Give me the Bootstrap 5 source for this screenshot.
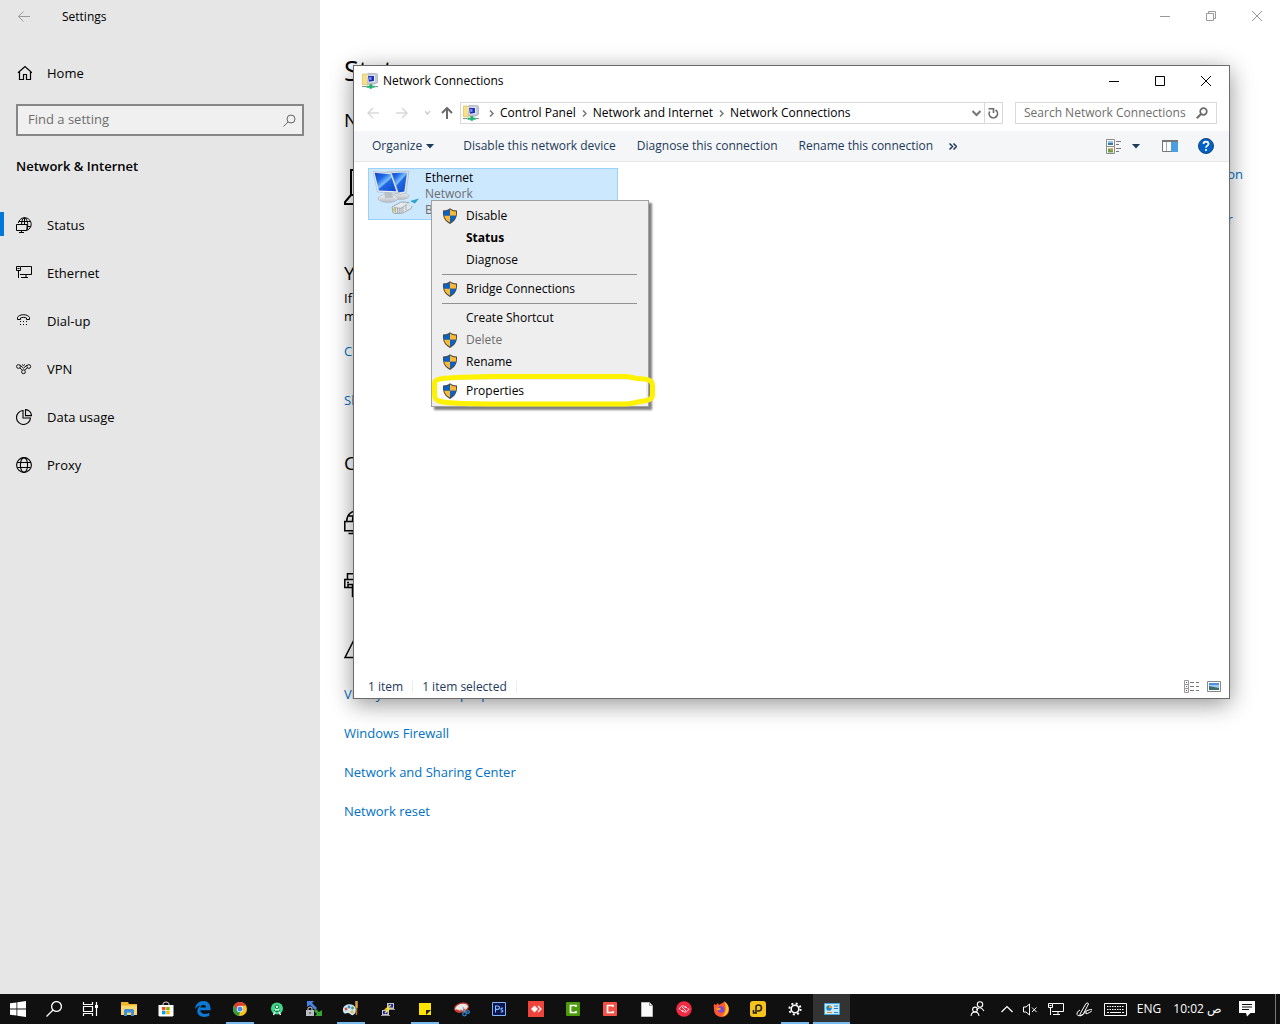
<!DOCTYPE html>
<html lang="en">
<head>
<meta charset="utf-8">
<meta name="viewport" content="width=device-width, initial-scale=1">
<title>Settings</title>
<link href="https://cdn.jsdelivr.net/npm/bootstrap@5.3.0/dist/css/bootstrap.min.css" rel="stylesheet">
<style>
body{font-family:"Open Sans","Noto Sans",sans-serif;font-size:12px;line-height:16px;color:#000;background:#fff}
svg{display:block;flex:none}
button{font:inherit;color:inherit;background:none;border:0;padding:0}
a{text-decoration:none;color:#0071c5}
.desk{min-height:100vh;position:relative;overflow:hidden}
/* settings app */
.side{width:25%;min-width:280px;background:#e6e6e6;padding-top:1px}
.bar-top{height:32px}
.side-link{height:48px;color:#000;font-size:13px;padding-left:16px;gap:15px;position:relative}
.side-link.on::before{content:"";position:absolute;left:0;top:11px;width:4px;height:24px;background:#0078d7}
.app-name{margin-left:30px}
.find{margin:7px 16px 0;height:32px;border:2px solid #868686;background:#f0f0f0;padding-right:6px}
.find input{font-size:13px;background:none;border:0;outline:0;padding:0 0 2px 10px;min-width:0}
.find input::placeholder,.seek input::placeholder{color:#6d6d6d;opacity:1}
.side-title{font-size:13px;line-height:20px;font-weight:600;margin:20px 16px 25px}
.pane{padding-left:24px;font-size:13px;line-height:18px}
.pane h1{font-size:27px;line-height:32px;font-weight:400;margin:23px 0 21px}
.pane h2{font-size:19px;line-height:24px;font-weight:400;margin-bottom:0}
.pane .lnk{display:block;line-height:20px}
.pane .gap-a{margin-top:37px}.pane .gap-b{margin-top:56px}.pane .gap-c{margin-top:4px}.pane .gap-d{margin-top:16px}
.pane .gap-e{margin-top:29px}.pane .gap-f{margin-top:41px}.pane .gap-g{margin-top:31px}.pane .gap-h{margin-top:20px}.pane .gap-i{margin-top:19px}
.helps{margin-top:132px;padding-right:37px}
.helps .lnk{margin-bottom:25px}
.wctl{color:#999}
.wctl button{width:46px;height:32px;display:grid;place-items:center}
/* explorer window */
.win{position:absolute;left:353px;top:65px;right:50px;height:634px;background:#fff;border:1px solid #6b6b6b;box-shadow:0 5px 22px rgba(0,0,0,.42)}
.win-title{height:30px;padding-left:8px;gap:5px}
.wctl.dark{color:#000}
.addr-row{height:34px;padding:0 12px 0 13px;margin-bottom:1px}
.up{margin-left:10px}
.addr{height:22px;border:1px solid #d9d9d9;margin-left:7px;margin-right:12px}
.addr button{height:20px}
.crumb{gap:6px;padding-left:2px}
.crumb .ico{margin-right:4px}
.refresh{width:18px;margin-left:3px;border-left:1px solid #d9d9d9;display:grid;place-items:center}
.seek{width:202px;height:22px;border:1px solid #d9d9d9}
.seek input{font-size:12px;border:0;outline:0;background:none;padding:0 0 1px 8px;min-width:0}
.cmd{height:31px;background:#f5f6f7;border-bottom:1px solid #e8e8e9;color:#1e395b;padding:0 15px 0 18px}
.cmd-a{margin-left:29px}
.cmd-b{margin-left:21px}
.cmd-c{margin-left:16px}
.v-opt{margin-left:10px}
.v-pane{margin-left:22px}
.v-help{margin-left:20px}
.files{padding:6px 14px}
.tile{width:250px;height:52px;background:#cce8ff;border:1px solid #99d1ff;gap:6px;padding:1px 0 0 4px}
.tile small{display:block;font-size:12px;color:#6d6d6d}
.stat{height:23px;color:#1e395b;padding:0 8px 0 14px}
.stat span{border-right:1px solid #ececec;padding-right:9px;margin-right:9px;line-height:12px}
/* context menu */
.ctx{position:absolute;left:431px;top:200px;width:218px;background:#eee;border:1px solid #a0a0a0;padding:4px 2px;box-shadow:3px 3px 2px rgba(0,0,0,.5)}
.ctx button{display:flex;align-items:center;width:100%;height:22px;padding-left:8px;gap:8px;text-align:left}
.ctx button:disabled{color:#6d6d6d}
.ctx button.hot{background:#fff}
.ctx hr{margin:3px 9px 3px 8px;border-top:1px solid #919191;opacity:1}
.ico{width:16px;height:16px;flex:none}
.ring{position:absolute;left:431px;top:373px;pointer-events:none}
/* taskbar */
.task{height:30px;background:#101010;color:#fff}
.task button{height:30px;width:37px;display:grid;place-items:center;position:relative}
.task .sys{width:36px}
.task .pinned{margin-left:2px}
.task .run::after{content:"";position:absolute;left:5px;right:4px;bottom:0;height:2px;background:#76b9ed}
.task .cur{background:#333}
.task .cur::after{left:0;right:0}
.task .tray{width:auto}
.traybox{gap:10px;padding-right:20px;border-right:1px solid #777;margin-right:4px;height:30px}
.task .people{margin-right:6px}
.task .wide{margin-left:2px}
.task .note{margin-left:7px}
</style>
</head>
<body>
<svg width="0" height="0" class="position-absolute">
<defs>
<symbol id="shield" viewBox="0 0 16 16"><path d="M8 .2C10 1.800 12 2.400 15 2.500 15.400 9 13.500 13.200 8 15.900 2.500 13.200.6 9 1 2.500 4 2.400 6 1.800 8 .2z" fill="#4a4a48"/><path d="M8 1.600v6.200H2.200C1.900 6.300 1.900 5 2 3.600 4.500 3.400 6.300 2.800 8 1.600z" fill="#0a62c4"/><path d="M8 1.600v6.200h5.800c.3-1.500.3-2.800.2-4.200C11.500 3.400 9.700 2.800 8 1.600z" fill="#fdb933"/><path d="M8 7.800v6.800c-3.300-1.800-5.200-3.700-5.800-6.800z" fill="#fdb933"/><path d="M8 7.800v6.800c3.300-1.800 5.200-3.700 5.800-6.800z" fill="#0a62c4"/></symbol>
<symbol id="netfold" viewBox="0 0 16 16"><path d="M.3 1h5.200v10.700H.3z" fill="#f7e08a" stroke="#d0b04a" stroke-width=".6"/><path d="M6 .4h8l1.600 1v8L13 11H6z" fill="#c5c8d8" stroke="#9a9eb0" stroke-width=".6"/><path d="M5 1.800l8 .4v6.600l-7 .8z" fill="#eef0fa"/><path d="M6 2.800l6 .3v5l-5.200.6z" fill="#1c2fbd"/><path d="M7 4l2.500.2v2.500L7.500 7z" fill="#7d98f5"/><path d="M6.500 10h4v1.500h-4z" fill="#b7bac8"/><path d="M7.500 11.300h2.800v1.700H7.500z" fill="#19a45c"/><path d="M4.500 12.800h8.300v2H10v1H7.500v-1h-3z" fill="#1fb573"/><path d="M0 13.500h4.500M12.800 13.500H16" stroke="#86908d" stroke-width="1.200"/></symbol>
<symbol id="globepc" viewBox="0 0 16 16"><path d="M2.300 6A6.500 6.500 0 1 1 11.500 13.100M5.500 7Q5.700 2 8 .7M11 13Q13.200 6 9.300.7M3 4.500h11.500M11.500 9.500H15M8.500.7V7" fill="none" stroke="currentColor"/><path d="M.5 7.500h10.500v6H.5zM5.500 13.500v2M3 15.500h5" fill="none" stroke="currentColor"/></symbol>
<symbol id="pc" viewBox="0 0 16 14"><path d="M5 1.500h10.500v8H4M.5 1.500h4v4h-4zM2.500 5.500v7.500M10 9.500v3M5 12.500h7M1.500 3.500h2" fill="none" stroke="currentColor"/></symbol>
</defs></svg>
<div class="desk d-flex flex-column">
 <div class="d-flex flex-grow-1">
  <aside class="side">
   <div class="bar-top d-flex align-items-center">
    <button aria-label="Back" class="ps-3"><svg width="16" height="14" viewBox="0 0 16 14" fill="none" stroke="#999"><path d="M14 6.500H2.500M7.500 1.500l-5 5 5 5"/></svg></button>
    <span class="app-name">Settings</span>
   </div>
   <a href="#" class="side-link d-flex align-items-center mt-3"><svg class="ico" viewBox="0 0 16 16" fill="none" stroke="#000" stroke-width="1.200"><path d="M2 7.800L9 1.500l7 6.300M3.500 7v7.500h4V9.500h3v5h4V7"/></svg><span>Home</span></a>
   <div class="find d-flex align-items-center"><input type="text" class="flex-grow-1" aria-label="Find a setting" placeholder="Find a setting"><svg width="13" height="13" viewBox="0 0 13 13" fill="none" stroke="#666"><circle cx="8" cy="5" r="4"/><path d="M5 8L.5 12.500"/></svg></div>
   <div class="side-title">Network &amp; Internet</div>
   <nav>
    <a href="#" class="side-link on d-flex align-items-center"><svg class="ico" viewBox="0 0 16 16"><use href="#globepc"/></svg><span>Status</span></a>
    <a href="#" class="side-link d-flex align-items-center"><svg class="ico" viewBox="0 0 16 16"><use href="#pc" width="16" height="14"/></svg><span>Ethernet</span></a>
    <a href="#" class="side-link d-flex align-items-center"><svg class="ico" viewBox="0 0 16 16" fill="none" stroke="#000"><path d="M1.500 6.500v-2C3 .8 12 .8 13.500 4.500v2h-3V5c-1-.8-5-.8-6 0v1.500z"/><path d="M4 8.500h1M7 8.500h1M10 8.500h1M4 11.500h1M7 11.500h1M10 11.500h1"/></svg><span>Dial-up</span></a>
    <a href="#" class="side-link d-flex align-items-center"><svg class="ico" viewBox="0 0 16 16" fill="none" stroke="#111"><circle cx="2.500" cy="5.500" r="1.900"/><circle cx="12.800" cy="5.500" r="1.900"/><circle cx="7.500" cy="10.800" r="1.900"/><path d="M4 4l3.500 3.200L11 4M3.800 6.800l2.700 2.500M8.500 9L11.500 7M6 3.500l1.500 1 1.500-1"/></svg><span>VPN</span></a>
    <a href="#" class="side-link d-flex align-items-center"><svg class="ico" viewBox="0 0 16 16" fill="none" stroke="#000" stroke-width="1.100"><path d="M7 1.500A7 7 0 1 0 14.500 9H7z"/><path d="M9.500.6v6h6A6.500 6.500 0 0 0 9.500.6z"/></svg><span>Data usage</span></a>
    <a href="#" class="side-link d-flex align-items-center"><svg class="ico" viewBox="0 0 16 16" fill="none" stroke="#000" stroke-width="1.100"><circle cx="8" cy="8" r="7.400"/><ellipse cx="8" cy="8" rx="3.600" ry="7.400"/><path d="M1.500 5.500h13M1.500 10.500h13"/></svg><span>Proxy</span></a>
   </nav>
  </aside>
  <main class="flex-grow-1 d-flex flex-column">
   <div class="bar-top wctl d-flex justify-content-end">
    <button aria-label="Minimize"><svg width="10" height="10" stroke="currentColor"><path d="M0 5.500h10"/></svg></button>
    <button aria-label="Restore"><svg width="10" height="10" fill="none" stroke="currentColor"><path d="M.5 2.500h7v7h-7zM2.500 2V.5h7v7H8"/></svg></button>
    <button aria-label="Close"><svg width="10" height="10" stroke="currentColor"><path d="M0 0l10 10M10 0L0 10"/></svg></button>
   </div>
   <div class="d-flex">
    <div class="pane">
     <h1>Status</h1>
     <h2>Network status</h2>
     <svg class="gap-a" width="54" height="36" viewBox="0 0 54 36" fill="none" stroke="#000" stroke-width="2"><path d="M7 1h44v25H7zM7 26L1 33v2h52v-2l-3-7"/></svg>
     <h2 class="gap-b">You’re connected</h2>
     <div class="gap-c">If you have a limited plan,<br>make it metered</div>
     <a href="#" class="lnk gap-d">Change connection</a>
     <a href="#" class="lnk gap-e">Show networks</a>
     <h2 class="gap-f">Change settings</h2>
     <svg class="gap-g" width="32" height="32" viewBox="0 0 32 32" fill="none" stroke="#000" stroke-width="1.500"><path d="M2.700 15C3 9 7 4.800 14 4.500c8 0 13 5 13 11s-3 9-8 11M8.500 15C8.500 9 11 6 14 4.800M4 10h22"/><path d="M.8 15.500h18.500v9.300H.8zM9.500 25v2.500M4.500 27.500h11"/></svg>
     <svg class="gap-g" width="32" height="32" viewBox="0 0 32 32" fill="none" stroke="#000" stroke-width="1.500"><path d="M3.500 10V4.800h22V10M5 18.500H.8V10.500h27v8H9M3 13.500h2M4 15.500h6v3H4zM8.500 15.500v12h16v-12"/></svg>
     <svg class="gap-g" width="32" height="32" viewBox="0 0 32 32" fill="none" stroke="#000" stroke-width="1.500"><path d="M1 25.500L14 0l13 25.500zM14 9v8M14 20v2"/></svg>
     <a href="#" class="lnk gap-h">View your network properties</a>
     <a href="#" class="lnk gap-i">Windows Firewall</a>
     <a href="#" class="lnk gap-i">Network and Sharing Center</a>
     <a href="#" class="lnk gap-i">Network reset</a>
    </div>
    <div class="pane helps ms-auto">
     <a href="#" class="lnk">Fixing network connection</a>
     <a href="#" class="lnk">Update network adapter</a>
    </div>
   </div>
  </main>
 </div>

 <section class="win d-flex flex-column" aria-label="Network Connections">
  <div class="win-title d-flex align-items-center">
   <svg class="ico"><use href="#netfold"/></svg><span>Network Connections</span>
   <div class="wctl dark d-flex ms-auto">
    <button aria-label="Minimize"><svg width="10" height="10" stroke="currentColor"><path d="M0 5.500h10"/></svg></button>
    <button aria-label="Maximize"><svg width="10" height="10" fill="none" stroke="currentColor"><path d="M.5 .5h9v9h-9z"/></svg></button>
    <button aria-label="Close"><svg width="10" height="10" stroke="currentColor"><path d="M0 0l10 10M10 0L0 10"/></svg></button>
   </div>
  </div>
  <div class="addr-row d-flex align-items-center">
   <button aria-label="Back"><svg width="12" height="12" fill="none" stroke="#d9d9d9" stroke-width="1.500"><path d="M12 6H1M6 1L1 6l5 5"/></svg></button>
   <button aria-label="Forward" class="ms-3"><svg width="14" height="12" fill="none" stroke="#d9d9d9" stroke-width="1.500"><path d="M1 6h11M7 1l5 5-5 5"/></svg></button>
   <button aria-label="Recent" class="ms-3"><svg width="6" height="6" fill="none" stroke="#d0d0d0" stroke-width="1.500"><path d="M0 1l2.500 3L5 1"/></svg></button>
   <button aria-label="Up" class="up"><svg width="12" height="12" fill="none" stroke="#6b6b6b" stroke-width="2"><path d="M6 12V1M1 6l5-5 5 5"/></svg></button>
   <div class="addr d-flex align-items-center flex-grow-1">
    <div class="crumb d-flex align-items-center flex-grow-1">
     <svg class="ico"><use href="#netfold"/></svg>
     <svg width="5" height="7" fill="none" stroke="#777" stroke-width="1.500"><path d="M1 .5l3 3-3 3"/></svg><span>Control Panel</span>
     <svg width="5" height="7" fill="none" stroke="#777" stroke-width="1.500"><path d="M1 .5l3 3-3 3"/></svg><span>Network and Internet</span>
     <svg width="5" height="7" fill="none" stroke="#777" stroke-width="1.500"><path d="M1 .5l3 3-3 3"/></svg><span>Network Connections</span>
    </div>
    <button aria-label="Previous locations"><svg width="9" height="7" fill="none" stroke="#777" stroke-width="2"><path d="M.5 1l4 4 4-4"/></svg></button>
    <button class="refresh" aria-label="Refresh"><svg width="11" height="12" viewBox="0 0 11 12" fill="none" stroke="#6b6b6b" stroke-width="1.600"><path d="M1.700 4.500A4.200 4.200 0 1 0 7.500 3"/><path d="M.5 1.800h5V6"/></svg></button>
   </div>
   <div class="seek d-flex align-items-center"><input type="text" class="flex-grow-1" aria-label="Search Network Connections" placeholder="Search Network Connections"><svg class="me-2" width="12" height="12" fill="none" stroke="#6b6b6b" stroke-width="1.700"><circle cx="7.500" cy="4.500" r="3.300"/><path d="M5 7L.8 11.200" stroke-width="2"/></svg></div>
  </div>
  <div class="cmd d-flex align-items-center">
   <button class="d-flex align-items-center">Organize<svg class="ms-1" width="8" height="5" fill="#1e395b"><path d="M0 0h8L4 4.500z"/></svg></button>
   <button class="cmd-a">Disable this network device</button>
   <button class="cmd-b">Diagnose this connection</button>
   <button class="cmd-b">Rename this connection</button>
   <button class="cmd-c" aria-label="More commands"><svg width="8" height="7" fill="none" stroke="#1e395b" stroke-width="1.500"><path d="M.5.500l3 3-3 3M4.500.500l3 3-3 3"/></svg></button>
   <div class="d-flex align-items-center ms-auto">
    <button aria-label="Change your view"><svg width="16" height="15" fill="none" stroke="#8a8a8a"><path d="M.5.500h8v7h-8zM.5 7.500h8v7h-8z" fill="#fff"/><path d="M10 2.500h5M10 5.500h3M10 9.500h5M10 12.500h3" stroke="#777"/><path d="M2 2h5v4H2z" fill="#8fc0f0" stroke="none"/><path d="M2 4h5v2H2z" fill="#3c7a9c" stroke="none"/><path d="M2 9.500h5v4H2z" fill="#68a04b" stroke="none"/><path d="M4 9.500h3v2H4z" fill="#d98f49" stroke="none"/></svg></button>
    <button aria-label="View options" class="v-opt"><svg width="8" height="5" fill="#1e395b"><path d="M0 0h8L4 4.500z"/></svg></button>
    <button aria-label="Preview pane" class="v-pane"><svg width="16" height="12" fill="none"><path d="M.5 1h15v10.500H.5z" fill="#fff" stroke="#777"/><path d="M0 0h16v2H0z" fill="#777"/><path d="M4.500 2v9" stroke="#aaa"/><path d="M9 2h7v10H9z" fill="#4a9fe0"/></svg></button>
    <button aria-label="Help" class="v-help"><svg width="16" height="16"><circle cx="8" cy="8" r="7.500" fill="#0062c4" stroke="#17457d"/><path d="M5.500 6c0-3.200 5-3.200 5 0 0 1.700-2.500 1.700-2.500 3.700" fill="none" stroke="#fff" stroke-width="1.700"/><circle cx="8" cy="12" r="1.100" fill="#fff"/></svg></button>
   </div>
  </div>
  <div class="files flex-grow-1">
   <div class="tile d-flex">
    <svg width="46" height="48" viewBox="0 0 46 48">
     <defs><linearGradient id="scr" x1="0" y1="0" x2="1" y2="1"><stop offset="0" stop-color="#1242c4"/><stop offset=".3" stop-color="#1f6ae8"/><stop offset=".5" stop-color="#7cc0fb"/><stop offset=".56" stop-color="#2268e2"/><stop offset="1" stop-color="#0c48cf"/></linearGradient>
     <linearGradient id="base" x1="0" y1="0" x2="0" y2="1"><stop offset="0" stop-color="#f4f5f6"/><stop offset="1" stop-color="#b4bac1"/></linearGradient></defs>
     <ellipse cx="28" cy="26" rx="8" ry="3.500" fill="url(#base)" stroke="#a6adb5" stroke-width=".5"/>
     <path d="M14 2l22-1-3 22-5 1.500-6-1z" fill="#dfe4e9" stroke="#a3aeb9" stroke-width=".6"/><path d="M16 3.200l18-.8-2.700 19-6.300 1z" fill="url(#scr)"/>
     <ellipse cx="15" cy="28.500" rx="10" ry="4" fill="url(#base)" stroke="#a6adb5" stroke-width=".5"/><path d="M11 21h8l1 7h-8z" fill="#b9c0c8"/>
     <path d="M0 1.500L18.500 3l7 20L4.500 22z" fill="#eef1f4" stroke="#a3aeb9" stroke-width=".6"/><path d="M1.600 2.800L17.600 4.200l5.700 17-17.500-.8z" fill="url(#scr)"/>
     <path d="M19 37l9-5 8 .5 4 2-2 4-8 4.500-8 .5-2-1z" fill="#e6eaec" stroke="#7f898e" stroke-width=".7"/><path d="M21 37.500l7 .8 8-5.500M28 38.300v4.500M22.500 38v4.500M24.500 38v5M26.300 38.200v5M30 37v5M33 35v5" stroke="#8b959a" stroke-width=".7" fill="none"/><path d="M20 38l2 .3v3.500l-2-.3z" fill="#d7cf72"/><path d="M33 35l5-4 8-2.500-4 6-5 3z" fill="#cfe6f2"/><path d="M37 31l9-2.500-4 5z" fill="#2fa3cf"/>
    </svg>
    <div><div>Ethernet</div><small>Network</small><small>Broadcom</small></div>
   </div>
  </div>
  <div class="stat d-flex align-items-center">
   <span>1 item</span><span>1 item selected</span>
   <div class="d-flex ms-auto align-items-center gap-2">
    <button aria-label="Details"><svg width="15" height="13" fill="none" stroke="#999"><path d="M.5.500h4v4h-4zM.5 4.500h4v4h-4zM.5 8.500h4v4h-4z"/><path d="M6 2.500h4M12 2.500h4M6 6.500h4M12 6.500h4M6 10.500h4M12 10.500h4" stroke="#777"/><path d="M2 2.500h1M2 6.500h1" stroke="#36c"/><path d="M2 10.500h1" stroke="#c22"/></svg></button>
    <button aria-label="Large icons"><svg width="14" height="11"><path d="M.5.500h13v10H.5z" fill="#fff" stroke="#888"/><path d="M2 2h10v7H2z" fill="#9bcbf5"/><path d="M2 2h10v2H2z" fill="#4d8fe0"/><path d="M2 5l5 1 5 1v2H2z" fill="#3d6d6c"/></svg></button>
   </div>
  </div>
 </section>

 <div class="ctx" role="menu">
  <button role="menuitem"><svg class="ico"><use href="#shield"/></svg>Disable</button>
  <button role="menuitem"><i class="ico"></i><b>Status</b></button>
  <button role="menuitem"><i class="ico"></i>Diagnose</button>
  <hr>
  <button role="menuitem"><svg class="ico"><use href="#shield"/></svg>Bridge Connections</button>
  <hr>
  <button role="menuitem"><i class="ico"></i>Create Shortcut</button>
  <button role="menuitem" disabled><svg class="ico"><use href="#shield"/></svg>Delete</button>
  <button role="menuitem"><svg class="ico"><use href="#shield"/></svg>Rename</button>
  <hr>
  <button role="menuitem" class="hot"><svg class="ico"><use href="#shield"/></svg>Properties</button>
 </div>
 <svg class="ring" width="226" height="36" fill="none" stroke="#fff200" stroke-width="5" stroke-linejoin="round"><path d="M3.500 10C4 6 9 5.500 24 4.500L60 3.500H196l10 2c12 .5 15.500 2 15.500 7v9c0 5-4 6-12 7-8 1.500-10 2.500-16 2.500H60C40 30.500 20 31 10 28.500 4 27 3.500 25 3.500 20z"/></svg>

 <footer class="task d-flex align-items-center">
  <button class="sys" aria-label="Start"><svg width="16" height="16" fill="#fff"><path d="M0 2.300L6.500 1.400v6.200H0zM7.300 1.300L16 0v7.600H7.300zM0 8.400h6.500v6.200L0 13.700zM7.300 8.400H16V16l-8.700-1.300z"/></svg></button>
  <button class="sys" aria-label="Search"><svg width="16" height="16" fill="none" stroke="#fff" stroke-width="1.300"><circle cx="10.500" cy="5.500" r="4.900"/><path d="M7 9L.5 15.500"/></svg></button>
  <button class="sys" aria-label="Task view"><svg width="17" height="16" fill="none" stroke="#fff"><path d="M1.500 1v2.500h9V1M1.500 15v-2.500h9V15M1.500 5.500h9v5h-9zM14.500 1v14" stroke-width="1.200"/><path d="M13 4h3v3h-3z" fill="#fff" stroke="none"/></svg></button>
  <button class="pinned" aria-label="File Explorer"><svg width="16" height="14"><path d="M0 0h7l1 2h8v11H0z" fill="#f0b429"/><path d="M0 3.500h16V13H0z" fill="#ffd970"/><path d="M3 14V8.500Q3 7 4.500 7h7Q13 7 13 8.500V14h-3v-3.500H6V14z" fill="#3f8fd9"/></svg></button>
  <button aria-label="Store"><svg width="16" height="16"><path d="M5 5V3q0-2 3-2t3 2v2" fill="none" stroke="#ddd"/><path d="M.5 4h15v10.500l-1 1h-13l-1-1z" fill="#fff"/><path d="M4 6h3.500v3.300H4z" fill="#f25022"/><path d="M8.200 6h3.500v3.300H8.200z" fill="#7fba00"/><path d="M4 10h3.500v3.300H4z" fill="#00a4ef"/><path d="M8.200 10h3.500v3.300H8.200z" fill="#ffb900"/></svg></button>
  <button aria-label="Edge"><svg width="16" height="16"><path d="M0 8C.5 3 4 0 8.500 0 13 0 15.500 3.500 15.500 7.500V9.300H5.300c.2 4.200 6 4.500 9 2.500v3c-4 2-12 1.700-12-4.800C2.300 7 4.200 5.200 6 4.500 3.500 4.700 1.500 6 0 8zM5.400 6.500h5.700c0-4-5.300-3.600-5.700 0z" fill="#0a7ad8"/></svg></button>
  <button class="run" aria-label="Chrome"><svg width="14" height="14"><circle cx="7" cy="7" r="7" fill="#f6c31c"/><path d="M1 3.400A7 7 0 0 1 13 3.500L7 4 4 8.500z" fill="#de3f33"/><path d="M1 3.400L4.500 9 7 10 6 14A7 7 0 0 1 1 3.400z" fill="#2f9e4d"/><circle cx="7" cy="7" r="3.200" fill="#fff"/><circle cx="7" cy="7" r="2.500" fill="#4688f0"/></svg></button>
  <button aria-label="Android Studio"><svg width="14" height="14"><circle cx="7" cy="6.500" r="6" fill="#3ddc84"/><path d="M7 5L3.500 13M7 5l3.500 8" stroke="#fff" stroke-width="1.400" fill="none"/><path d="M4 8.500q3 2 6 0" stroke="#0b6e55" stroke-width="1.200" fill="none"/><circle cx="7" cy="4.800" r="1.800" fill="#e8f5ee" stroke="#0b6e55"/></svg></button>
  <button aria-label="Transfer"><svg width="16" height="16"><path d="M1 0h7L6 2l5 5-2 2-5-5-3 2z" fill="#4b7fe0"/><path d="M16 15H9l2-2-3-3 2-2 3 3 3-2z" fill="#38a432"/><path d="M0 9h8v6H0z" fill="#b9bcc2"/><path d="M2 9V7q2-2 4 0v2" fill="none" stroke="#ccc"/><path d="M4 11v2" stroke="#333"/></svg></button>
  <button class="run" aria-label="Paint"><svg width="17" height="16"><path d="M1 10C0 5 6 2 11 4c4 2 4 8 0 10-2 1-3-2-5-2s-4 2-5-2z" fill="#cfe5f3"/><circle cx="4" cy="8" r="1.400" fill="#e34b3b"/><circle cx="7" cy="6" r="1.400" fill="#3d82da"/><circle cx="10.500" cy="7" r="1.400" fill="#3da44e"/><circle cx="10" cy="11" r="1.400" fill="#e9b821"/><path d="M14.500 0v7" stroke="#dc9a45" stroke-width="2.500"/><path d="M14.500 7v7" stroke="#b0692e" stroke-width="1.500"/></svg></button>
  <button aria-label="PuTTY"><svg width="14" height="15"><path d="M6 1h7v6H6zM1 8h7v5H1z" fill="#c7c9cf"/><path d="M7.500 2h4.500v3.500H7.500zM2 9h4.500v3H2z" fill="#1925a8"/><path d="M0 13.500h9M6 7.500h8" stroke="#999"/><path d="M10 3L5 7h3l-4 4" stroke="#fde22f" stroke-width="1.500" fill="none"/></svg></button>
  <button class="run" aria-label="Sticky Notes"><svg width="12" height="12"><path d="M0 0h12v12H0z" fill="#ffe400"/><path d="M7 7h5l-5 5z" fill="#222"/></svg></button>
  <button aria-label="Snipping Tool"><svg width="16" height="15"><ellipse cx="7.500" cy="5.500" rx="7" ry="4.300" fill="#e7e9ed" stroke="#d43a30" stroke-width="1.200" transform="rotate(-15 8 5.500)"/><path d="M2 8q5 3 9-1" stroke="#d43a30" stroke-width="1.500" fill="none"/><path d="M6 8l6 1M9 5l2 6" stroke="#999"/><circle cx="10.500" cy="12" r="1.800" fill="none" stroke="#2a83c9" stroke-width="1.300"/><circle cx="14" cy="10" r="1.400" fill="none" stroke="#2a83c9" stroke-width="1.300"/></svg></button>
  <button aria-label="Photoshop"><svg width="14" height="14"><path d="M.5.500h13v13H.5z" fill="#0a1450" stroke="#82b8f5"/><path d="M3.500 10.500V4h2q2 0 2 1.700t-2 1.700h-2M11 6.300c-2.500-.6-2.600 1.200-1.200 1.700 1.700.5 1.400 2.500-1.200 1.800" fill="none" stroke="#86c0ff" stroke-width="1.100"/></svg></button>
  <button aria-label="AnyDesk"><svg width="16" height="16"><path d="M0 0h16v16H0z" fill="#ef443b"/><path d="M6.500 4.500L10 8l-3.500 3.500L3 8z" fill="#fff"/><path d="M10 5l3 3-3 3" fill="none" stroke="#fff" stroke-width="1.200"/></svg></button>
  <button aria-label="Camtasia"><svg width="14" height="14"><rect width="14" height="14" rx="1" fill="#4b9b0b"/><path d="M10 5V3.500H4.500v7H10V9" fill="none" stroke="#fff" stroke-width="1.700"/></svg></button>
  <button aria-label="Camtasia Recorder"><svg width="14" height="14"><rect width="14" height="14" rx="1" fill="#f45246"/><path d="M10 5V3.500H4.500v7H10V9" fill="none" stroke="#fff" stroke-width="1.700"/></svg></button>
  <button aria-label="Document"><svg width="12" height="15"><path d="M.5.500h8l3 3v11H.5z" fill="#fafafa" stroke="#bbb"/><path d="M8.500.500v3h3" fill="none" stroke="#999"/></svg></button>
  <button aria-label="Authy"><svg width="16" height="16"><circle cx="8" cy="8" r="7.800" fill="#ee2b42"/><path d="M3 8.500c2-4.500 5-4.500 6.500-1.500M13 7.500c-2 4.500-5 4.500-6.500 1.500M6 6l4 4M9 5l2.500 2.500M4.500 8.500L7 11" fill="none" stroke="#fff" stroke-width=".9"/></svg></button>
  <button aria-label="Firefox"><svg width="16" height="16"><path d="M1 3l2 1 2-2 1 2 5-3c4 2 5 5 5 8a7.500 7 0 0 1-15 0c0-2-.5-4 0-6z" fill="#ff5a2f"/><path d="M11 0c4 3 5 6 4.500 9C15 13 12 15 9 15.500c4-3.500 5-9 2-15.500z" fill="#ffc72e"/><circle cx="8" cy="8.500" r="3.300" fill="#7b4ad2"/><path d="M3 7q3-1 5 1-1 2-4 1z" fill="#ff9a2e"/></svg></button>
  <button aria-label="LDPlayer"><svg width="16" height="16"><rect width="16" height="16" rx="3" fill="#f6c51c"/><path d="M6 12V6q0-2 2.500-2 3 0 3 3t-3 3H7M3.500 9v3H7" fill="none" stroke="#222" stroke-width="1.600"/></svg></button>
  <button class="run" aria-label="Settings"><svg width="14" height="14" fill="none" stroke="#fff"><circle cx="7" cy="7" r="3.800" stroke-width="1.600"/><circle cx="7" cy="7" r="5.600" stroke-width="2" stroke-dasharray="2 2.398"/></svg></button>
  <button class="run cur" aria-label="Network Connections"><svg width="16" height="12"><path d="M.5.500h15v11H.5z" fill="#c9ebfb" stroke="#3aa6e3"/><circle cx="5" cy="5" r="2.800" fill="#1f88cf"/><path d="M5 5V2.200A2.800 2.800 0 0 1 7.800 5z" fill="#f7a31c"/><path d="M10 3h4M10 5.500h4" stroke="#2077c2"/><path d="M3 9.500h5" stroke="#f08a1c"/><path d="M10 9.500h4" stroke="#1f88cf"/></svg></button>
  <div class="d-flex align-items-center ms-auto traybox">
   <button class="tray people" aria-label="People"><svg width="15" height="16" fill="none" stroke="#fff" stroke-width="1.100"><circle cx="10" cy="3.500" r="2.700"/><path d="M6.500 9q3.500-5 7.500 1"/><circle cx="5" cy="8.500" r="2.400"/><path d="M1 15q.5-4 4-4t4 4"/></svg></button>
   <button class="tray" aria-label="Show hidden icons"><svg width="12" height="8" fill="none" stroke="#fff" stroke-width="1.200"><path d="M.5 7L6 1.500 11.500 7"/></svg></button>
   <button class="tray" aria-label="Volume"><svg width="15" height="13" fill="none" stroke="#fff"><path d="M.5 4h2.500l3.500-3v11L3 9H.5zM9 4.500l4.500 4.500M13.500 4.500L9 9"/></svg></button>
   <button class="tray" aria-label="Network"><svg width="16" height="14"><use href="#pc"/></svg></button>
   <button class="tray wide" aria-label="Ink"><svg width="16" height="15" fill="none" stroke="#fff"><path d="M4 12L10 1.500q2-1.500 2.500.5L7 12.500l-3 1.500zM4 8q-4 2-3 4.500t6 0q3-5 7.500-5t-1 3-3-1"/></svg></button>
   <button class="tray wide" aria-label="Keyboard"><svg width="23" height="13" fill="none" stroke="#fff"><path d="M.5.500h22v12H.5z"/><path d="M3 3.500h17M3 6.500h17" stroke-dasharray="1.500 1"/><path d="M3 9.500h2M6 9.500h11M18 9.500h2"/></svg></button>
   <button class="tray">ENG</button>
   <button class="tray wide">10:02 ص</button>
   <button class="tray note" aria-label="Notifications"><svg width="16" height="16"><path d="M0 0h16v12h-4.500L8 15.500 7 12H0z" fill="#fff"/><path d="M3 3.500h10M3 6h10M3 8.500h7" stroke="#101010"/></svg></button>
  </div>
 </footer>
</div>
<script src="https://cdn.jsdelivr.net/npm/bootstrap@5.3.0/dist/js/bootstrap.bundle.min.js"></script>
</body>
</html>
